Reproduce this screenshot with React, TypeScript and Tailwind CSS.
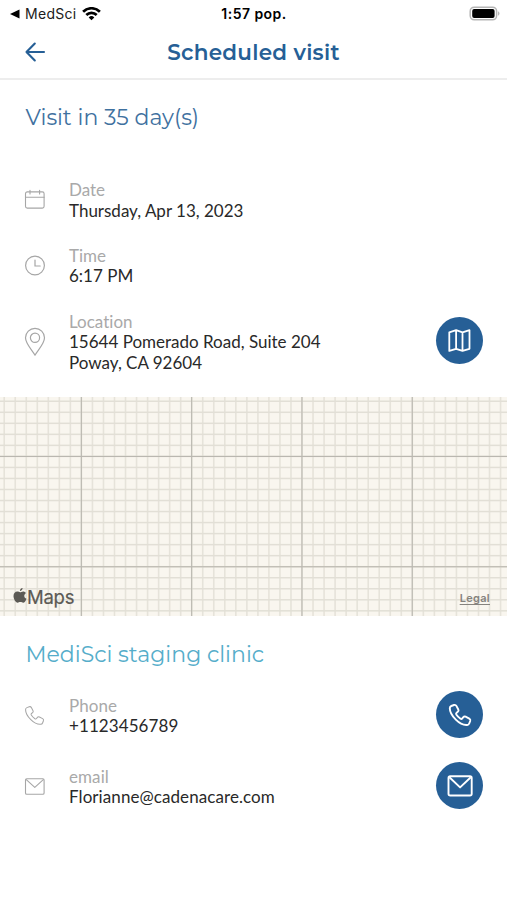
import React from 'react';

interface InfoRowProps {
  icon: React.ReactNode;
  label: string;
  lines: string[];
  action?: React.ReactNode;
  actionLabel?: string;
}

const range = (count: number) => Array.from({ length: count }, (_, i) => i);

const CalendarIcon = () => (
  <svg width="22" height="22" viewBox="0 0 22 22" fill="none" stroke="#a6a6a6" strokeWidth="1.1" strokeLinecap="round">
    <rect x="1.5" y="2.9" width="18.6" height="16.2" rx="1.8" />
    <path d="M1.5 8.200h18.600M6 1.300v3.600M15.600 1.300v3.600" />
  </svg>
);

const ClockIcon = () => (
  <svg width="22" height="22" viewBox="0 0 22 22" fill="none" stroke="#a6a6a6" strokeWidth="1.2" strokeLinecap="round">
    <circle cx="11" cy="10.5" r="9.4" />
    <path d="M11 5V11h5.2" />
  </svg>
);

const PinIcon = () => (
  <svg width="22" height="30" viewBox="0 0 22 30" fill="none" stroke="#a6a6a6" strokeWidth="1.2" strokeLinejoin="round">
    <path d="M11 28.200C8.600 23.500 1.500 17 1.500 10.800a9.500 9.500 0 0 1 19 0C20.500 17 13.400 23.500 11 28.200Z" />
    <circle cx="11" cy="10.800" r="4.600" />
  </svg>
);

const PhoneIcon = ({ size, color, stroke }: { size: number; color: string; stroke: number }) => (
  <svg width={size} height={size} viewBox="0 0 24 24" fill="none" stroke={color} strokeWidth={stroke} strokeLinejoin="round">
    <path d="M3.300 3 6 2c1-.3 1.900 0 2.400.9l1.900 3.600c.5 1 .3 1.700-.5 2.300L8.600 9.700c-.6.500-.7 1.100-.3 1.800 1.100 1.700 2.500 3.100 4.200 4.200.7.4 1.300.3 1.800-.3l1-1.200c.6-.8 1.300-1 2.300-.5l3.700 1.900c.9.500 1.200 1.400.9 2.400l-1 2.500c-.4 1-1.100 1.400-2.100 1.500-3.200.3-7.700-1.700-11.300-5.300C4 12.900 1.800 8.600 1.800 5.300c0-1.100.5-1.900 1.500-2.300Z" />
  </svg>
);

const MailIcon = () => (
  <svg width="22" height="20" viewBox="0 0 22 20" fill="none" stroke="#a6a6a6" strokeWidth="1.1" strokeLinejoin="round">
    <rect x="1.500" y="1.700" width="18.600" height="15.600" rx="1.300" />
    <path d="M2 2.300l8.800 8 8.800-8" />
  </svg>
);

const MapAction = () => (
  <svg width="26" height="26" viewBox="0 0 26 26" fill="none" stroke="#fff" strokeWidth="1.800" strokeLinejoin="round">
    <path d="M2.300 4.300L9.100 2.200l6.400 2.100 7-2.100v18.600l-7 2.100-6.400-2.100-6.800 2.100V4.300ZM9.100 2.200v18.600M15.500 4.300v18.600" />
  </svg>
);

const MailAction = () => (
  <svg width="28" height="26" viewBox="0 0 28 26" fill="none" stroke="#fff" strokeWidth="1.900" strokeLinejoin="round">
    <rect x="2.500" y="3.300" width="23.200" height="19.200" rx="1.800" />
    <path d="M3.400 4.200l10.700 10.200L24.800 4.200" />
  </svg>
);

const StatusBar = () => (
  <div className="grid h-[27px] shrink-0 grid-cols-3 items-center pl-2.5 pr-[7px] font-['Inter','Liberation_Sans',sans-serif] text-black">
    <div className="flex items-center">
      <svg width="10" height="10" viewBox="0 0 10 10">
        <path d="M0 5L9.500.600v8.800Z" />
      </svg>
      <span className="ml-[5px] text-[14px] tracking-[0.300px] text-[#202020]">MedSci</span>
      <svg className="ml-[5px]" width="19" height="14" viewBox="0 0 19 14" fill="none" stroke="#000" strokeWidth="2.700">
        <path d="M1.100 4.700a12 12 0 0 1 16.800 0M4.300 8a7.400 7.400 0 0 1 10.400 0" />
        <path d="M9.500 13.200L6.700 10.400a4 4 0 0 1 5.600 0Z" fill="#000" stroke="none" />
      </svg>
    </div>
    <span className="-ml-0.5 whitespace-nowrap text-center text-[14px] font-semibold tracking-[0.450px]">1:57 pop.</span>
    <svg className="justify-self-end" width="31" height="16" viewBox="0 0 31 16">
      <rect x="1.200" y="1.200" width="26.400" height="12.600" rx="4" fill="#fff" stroke="#b5b5b5" strokeWidth="1.500" />
      <rect x="3.200" y="3" width="22.400" height="9" rx="2" />
      <path d="M29.200 5.300c1.700.8 1.700 3.600 0 4.400Z" fill="#aaa" />
    </svg>
  </div>
);

const InfoRow: React.FC<InfoRowProps> = ({ icon, label, lines, action, actionLabel }) => (
  <div className="flex items-center px-6">
    <div className="flex w-[45px] shrink-0 items-center pb-px">{icon}</div>
    <div className="flex-1 text-[17px] leading-[20.500px] [font-variant-ligatures:none]">
      <p className="text-[#a9a9a9]">{label}</p>
      {lines.map((line) => (
        <p key={line} className="whitespace-nowrap text-[#292929]">{line}</p>
      ))}
    </div>
    {action && (
      <button aria-label={actionLabel} className="-mb-0.5 -mt-[5px] flex size-[47px] shrink-0 items-center justify-center rounded-full bg-[#265f96]">
        {action}
      </button>
    )}
  </div>
);

const MapPreview = () => (
  <div className="relative h-[219px] shrink-0 bg-[#f9f6ef]">
    <svg className="block" width="507" height="219" viewBox="0 0 507 219">
      {range(46).map((i) => (
        <rect key={`v${i}`} x={3.400 + i * 11.030} y="0" width="1.600" height="219" fill="#e6e3da" />
      ))}
      {range(20).map((i) => (
        <rect key={`h${i}`} x="0" y={3.500 + i * 11.030} width="507" height="1.500" fill="#e2dfd6" />
      ))}
      {range(4).map((i) => (
        <rect key={`mv${i}`} x={80.800 + i * 110.300} y="0" width="1.100" height="219" fill="#bab7b0" />
      ))}
      {range(2).map((i) => (
        <rect key={`mh${i}`} x="0" y={58.900 + i * 110.300} width="507" height="1.100" fill="#bab7b0" />
      ))}
    </svg>
    <div className="absolute bottom-[7px] left-[13px] flex items-center text-[#5c5a55]">
      <svg className="-mt-0.5" width="14" height="17" viewBox="0 0 14 17" fill="currentColor">
        <path d="M9.600 1c.1 1.500-1.100 3-2.700 3.100C6.700 2.600 8.100 1.100 9.600 1ZM7.100 5.200c.8 0 1.600-.8 3-.8 1.200 0 2.300.6 2.900 1.500-2.500 1.500-2.100 4.800.5 5.800-.7 1.900-1.900 4-3.300 4-1 0-1.500-.6-2.800-.6s-1.800.6-2.700.600C2.500 15.700.5 12 .5 9.100c0-3 1.900-4.600 3.700-4.600 1.300 0 2.200.7 2.900.7Z" />
      </svg>
      <span className="font-['Inter','Liberation_Sans',sans-serif] text-[18.500px] leading-6 tracking-[-0.250px] [-webkit-text-stroke:0.200px]">Maps</span>
    </div>
    <a className="absolute bottom-[9px] right-[17px] font-['Inter','Liberation_Sans',sans-serif] text-[11px] font-semibold leading-[18px] tracking-[0.300px] text-[#86837e] underline underline-offset-2">
      Legal
    </a>
  </div>
);

const App: React.FC = () => {
  return (
    <div className="flex h-[900px] w-[507px] flex-col overflow-hidden bg-white font-['Lato','Open_Sans',sans-serif]">
      <StatusBar />

      {/* Header */}
      <header className="grid h-[53px] shrink-0 grid-cols-[72px_1fr_72px] items-center border-b-2 border-[#ededed] text-[#265f96]">
        <button aria-label="Back" className="pb-px pl-[25px]">
          <svg width="21" height="20" viewBox="0 0 21 20" fill="none" stroke="currentColor" strokeWidth="2.100" strokeLinecap="round" strokeLinejoin="round">
            <path d="M19 10H1.500M9.800 1.500L1.500 10l8.300 8.500" />
          </svg>
        </button>
        <h1 className="whitespace-nowrap text-center font-['Montserrat','Inter',sans-serif] text-[21.500px] font-semibold tracking-[0.250px]">
          Scheduled visit
        </h1>
      </header>

      {/* Visit details */}
      <h2 className="mt-[22px] pl-[25.500px] font-['Montserrat','Inter',sans-serif] text-[22px] leading-8 text-[#3f719f]">Visit in 35 day(s)</h2>
      <section className="mt-[46.300px] flex flex-col gap-[24.700px]">
        <InfoRow icon={<CalendarIcon />} label="Date" lines={['Thursday, Apr 13, 2023']} />
        <InfoRow icon={<ClockIcon />} label="Time" lines={['6:17 PM']} />
        <InfoRow
          icon={<PinIcon />}
          label="Location"
          lines={['15644 Pomerado Road, Suite 204', 'Poway, CA 92604']}
          action={<MapAction />}
          actionLabel="Open map"
        />
      </section>

      <div className="h-[23.800px] shrink-0" />
      <MapPreview />

      {/* Clinic contacts */}
      <h2 className="mt-[23px] pl-[25.500px] font-['Montserrat','Inter',sans-serif] text-[22px] leading-8 text-[#55adca]">MediSci staging clinic</h2>
      <section className="mt-[25px] flex flex-col gap-[30px] tracking-[0.080px]">
        <InfoRow
          icon={<PhoneIcon size={21} color="#a6a6a6" stroke={1.200} />}
          label="Phone"
          lines={['+1123456789']}
          action={<PhoneIcon size={24} color="#fff" stroke={1.900} />}
          actionLabel="Call clinic"
        />
        <InfoRow
          icon={<MailIcon />}
          label="email"
          lines={['Florianne@cadenacare.com']}
          action={<MailAction />}
          actionLabel="Email clinic"
        />
      </section>
    </div>
  );
};

export default App;
